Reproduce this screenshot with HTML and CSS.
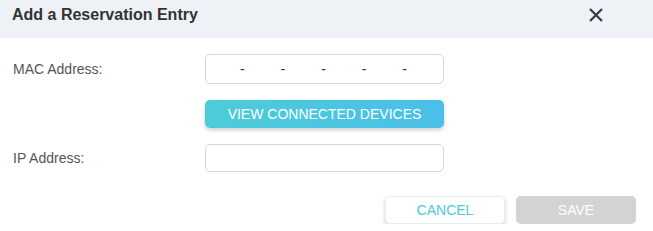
FILE: index.html
```
<!DOCTYPE html>
<html lang="en">
<head>
    <meta charset="UTF-8">
    <meta name="viewport" content="width=device-width, initial-scale=1.0">
    <title>Add a Reservation Entry</title>
    <link rel="stylesheet" href="styles.css">
</head>
<body>

<div class="dialog">
    <!-- Header -->
    <div class="dialog-header">
        <h1>Add a Reservation Entry</h1>
        <button class="close-btn" aria-label="Close">
            <svg width="14" height="14" viewBox="0 0 14 14">
                <path d="M1 1 L13 13 M13 1 L1 13" stroke="#333b44" stroke-width="2.2" fill="none"/>
            </svg>
        </button>
    </div>

    <!-- Form -->
    <div class="dialog-body">
        <div class="row">
            <label>MAC Address:</label>
            <div class="mac-input">
                <span>-</span><span>-</span><span>-</span><span>-</span><span>-</span>
            </div>
        </div>

        <div class="row">
            <label></label>
            <button class="view-btn">VIEW CONNECTED DEVICES</button>
        </div>

        <div class="row">
            <label>IP Address:</label>
            <input type="text" class="text-input">
        </div>
    </div>

    <!-- Footer -->
    <div class="dialog-footer">
        <button class="cancel-btn">CANCEL</button>
        <button class="save-btn" disabled>SAVE</button>
    </div>
</div>

</body>
</html>
```

FILE: styles.css
```
body {
    font-family: "Liberation Sans", Arial, sans-serif;
    margin: 0;
    background-color: white;
}

.dialog {
    width: 653px;
}

.dialog-header {
    display: flex;
    justify-content: space-between;
    align-items: center;
    height: 38px;
    padding: 0 12px;
    background-color: #eef1f6;
    box-sizing: border-box;
}

h1 {
    margin: 0;
    margin-top: -8px;
    font-size: 16px;
    font-weight: bold;
    color: #333;
}

.close-btn {
    border: none;
    background: none;
    padding: 0;
    margin-right: 38px;
    margin-top: -8px;
    display: flex;
    cursor: pointer;
}

.dialog-body {
    padding: 16px 0 0 0;
}

.row {
    display: flex;
    align-items: center;
    margin-bottom: 16px;
}

.row label {
    width: 192px;
    padding-left: 13px;
    font-size: 14px;
    color: #555;
}

.mac-input {
    width: 239px;
    height: 30px;
    border: 1px solid #d6d6d6;
    border-radius: 5px;
    box-sizing: border-box;
    display: flex;
    justify-content: space-around;
    align-items: center;
    padding: 0 18px 0 16px;
    font-size: 14px;
    color: #333;
}

.view-btn {
    width: 239px;
    height: 28px;
    border: none;
    border-radius: 5px;
    background: linear-gradient(to right, #4dccd6, #4abfe9);
    box-shadow: 0px 2px 4px rgba(0, 0, 0, 0.2);
    color: white;
    font-family: inherit;
    font-size: 14px;
    cursor: pointer;
}

.text-input {
    width: 239px;
    height: 28px;
    border: 1px solid #d6d6d6;
    border-radius: 5px;
    box-sizing: border-box;
    outline: none;
}

.dialog-footer {
    display: flex;
    justify-content: flex-end;
    gap: 11px;
    padding: 8px 17px 0 0;
}

.cancel-btn,
.save-btn {
    width: 120px;
    height: 28px;
    border-radius: 5px;
    font-family: inherit;
    font-size: 14px;
    cursor: pointer;
}

.cancel-btn {
    background-color: white;
    border: 1px solid #e8eef0;
    box-shadow: 0px 2px 4px rgba(0, 0, 0, 0.18);
    color: #4dcad6;
}

.save-btn {
    background-color: #d3d3d3;
    border: none;
    color: white;
}
```
